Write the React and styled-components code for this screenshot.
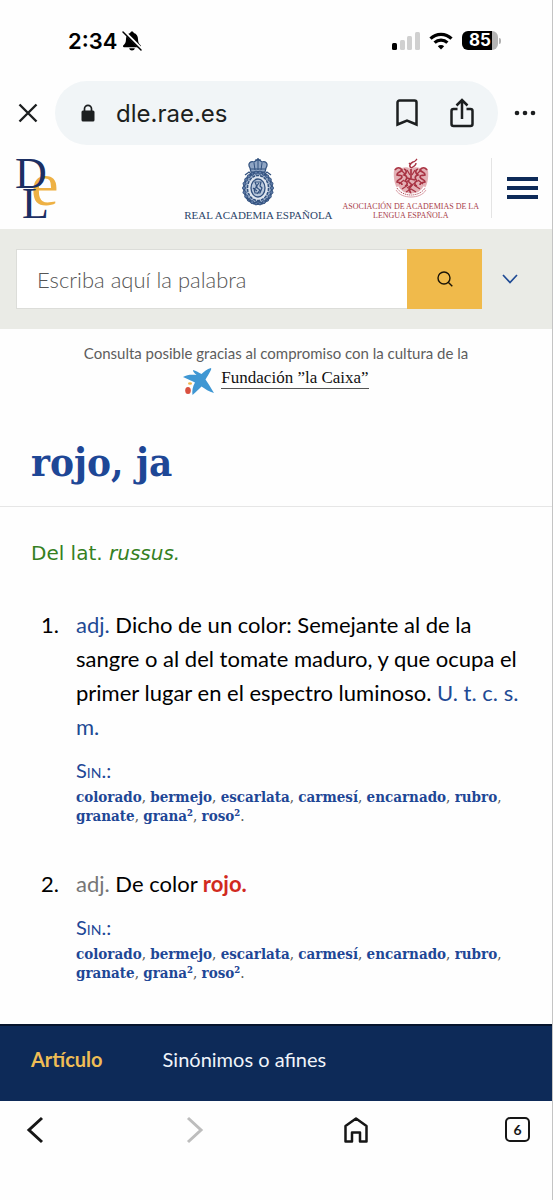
import React, { useState } from 'react';
import styled, { createGlobalStyle, css } from 'styled-components';

const GlobalStyle = createGlobalStyle`
  * {
    box-sizing: border-box;
  }

  body {
    margin: 0;
    background: #fefefe;
    color: #000;
    font-family: Lato, 'Liberation Sans', sans-serif;
  }

  button {
    padding: 0;
    border: none;
    background: none;
    color: inherit;
    font: inherit;
    cursor: pointer;
  }

  a {
    color: inherit;
    text-decoration: none;
  }

  svg {
    display: block;
    flex: none;
    overflow: visible;
  }
`;

const Screen = styled.div`
  display: flex;
  flex-direction: column;
  min-height: 100vh;
  border-right: 1px solid #c4c4c4;
`;

/* Status bar */
const StatusBar = styled.div`
  display: flex;
  justify-content: space-between;
  align-items: center;
  height: 81px;
  padding: 0 51px 0 68px;
  font-family: Inter, 'Liberation Sans', sans-serif;
`;

const StatusGroup = styled.div`
  display: flex;
  align-items: center;
  gap: ${({ $gap }) => $gap}px;
`;

const Clock = styled.span`
  font-size: 22px;
  font-weight: 600;
`;

const Battery = styled.span`
  display: flex;
  align-items: center;
  gap: 1px;

  &::after {
    content: '';
    width: 2px;
    height: 6px;
    border-radius: 0 2px 2px 0;
    background: #b0b0b0;
  }
`;

const BatteryLevel = styled.span`
  width: 36px;
  height: 19px;
  border-radius: 6px;
  background: linear-gradient(to right, #000 84%, #b4b4b4 84%);
  color: #fff;
  font-size: 17px;
  font-weight: 700;
  line-height: 19px;
  text-align: center;
`;

/* Browser address bar */
const BrowserBar = styled.div`
  display: flex;
  align-items: center;
  height: 64px;
  padding-right: 16px;
  color: #1c1f20;
`;

const CloseButton = styled.button`
  display: flex;
  justify-content: center;
  width: 55px;
`;

const AddressPill = styled.div`
  display: flex;
  flex: 1;
  align-items: center;
  height: 64px;
  margin-right: 16px;
  padding: 0 24px 0 26px;
  border-radius: 32px;
  background: #f1f5f7;
`;

const Address = styled.span`
  flex: 1;
  margin-left: 21px;
  font-family: Inter, 'Liberation Sans', sans-serif;
  font-size: 24px;
`;

const PillActions = styled.div`
  display: flex;
  gap: 32px;
`;

/* Site header */
const SiteHeader = styled.header`
  display: flex;
  align-items: flex-start;
  height: 84px;
  padding: 13px 14px 0 15px;
`;

const Institutions = styled.div`
  display: flex;
  flex: 1;
  justify-content: flex-end;
  gap: 10px;
  padding-right: 12px;
`;

const Institution = styled.a`
  display: flex;
  flex-direction: column;
  align-items: center;
  color: ${({ $color }) => $color};
  font-family: 'Liberation Serif', serif;
  font-size: ${({ $size }) => $size}px;
  line-height: 9px;
  text-align: center;
  white-space: nowrap;
`;

const RaeName = styled.span`
  padding-top: 5px;
`;

const AsaleName = styled.span`
  padding-top: 3px;
`;

const MenuButton = styled.button`
  display: flex;
  align-items: center;
  height: 60px;
  padding-left: 15px;
  border-left: 1px solid #e4e4e4;
`;

/* Search */
const SearchBar = styled.form`
  display: flex;
  align-items: center;
  height: 100px;
  padding: 0 15px 0 16px;
  background: #eaebe6;
`;

const SearchInput = styled.input`
  flex: 1;
  min-width: 0;
  height: 60px;
  padding: 0 20px;
  border: 1px solid #dcddd9;
  border-right: none;
  border-radius: 0;
  outline: none;
  background: #fff;
  font-family: Lato, 'Liberation Sans', sans-serif;
  font-size: 22px;
  font-weight: 300;

  &::placeholder {
    color: #555;
    opacity: 1;
  }
`;

const SearchButton = styled.button`
  display: flex;
  align-items: center;
  justify-content: center;
  width: 75px;
  height: 60px;
  background: #f0ba4b;
`;

const ExpandButton = styled.button`
  display: flex;
  justify-content: center;
  width: 55px;
  color: #1f4a94;
`;

/* Sponsor */
const Sponsor = styled.div`
  display: flex;
  flex-direction: column;
  align-items: center;
  padding: 14px 0 0;
  color: #5d5d5d;
  font-size: 15px;
  line-height: 20px;
`;

const SponsorLink = styled.a`
  display: flex;
  align-items: flex-start;
  gap: 6px;
  margin-top: 5px;
  color: #111;
  font-family: 'Liberation Serif', serif;
  font-size: 17px;
`;

const SponsorName = styled.span`
  border-bottom: 1px solid #555;
`;

/* Article */
const Headword = styled.h1`
  margin: 0;
  padding: 39px 31px 16px;
  border-bottom: 1px solid #e6e6e6;
  color: #1e4796;
  font-family: 'DejaVu Serif Condensed', 'DejaVu Serif', serif;
  font-size: 40px;
  font-stretch: condensed;
  font-weight: 700;
  line-height: 56px;
`;

const Article = styled.article`
  flex: 1;
  padding: 32px 24px 0 31px;
`;

const Etymology = styled.p`
  margin: 0;
  color: #35801f;
  font-family: Verdana, 'DejaVu Sans', sans-serif;
  font-size: 20px;
  line-height: 28px;
`;

const Senses = styled.ol`
  display: flex;
  flex-direction: column;
  gap: 41px;
  margin: 41px 0 0;
  padding: 0;
  list-style: none;
`;

const Sense = styled.li`
  display: flex;
`;

const SenseNumber = styled.span`
  width: 45px;
  padding-left: 10px;
  font-size: 22px;
  line-height: 34px;
`;

const SenseBody = styled.div`
  flex: 1;
`;

const Definition = styled.p`
  margin: 0 0 13px;
  font-size: 22px;
  line-height: 34px;
`;

const Mark = styled.abbr`
  color: ${({ $muted }) => ($muted ? '#767676' : '#1f4a94')};
`;

const Highlight = styled.strong`
  color: #d12a1e;
`;

const SynLabel = styled.div`
  color: #1e4796;
  font-size: 20px;
  font-variant: small-caps;
  line-height: 26px;
`;

const Synonyms = styled.p`
  margin: 5px 0 0;
  color: #555;
  font-family: 'DejaVu Serif Condensed', 'DejaVu Serif', serif;
  font-size: 15px;
  font-stretch: condensed;
  line-height: 19px;

  a {
    color: #1e4796;
    font-weight: 700;
  }
`;

/* Bottom */
const Tabs = styled.nav`
  display: flex;
  gap: 60px;
  height: 77px;
  padding: 20px 31px 0;
  border-top: 2px solid #06142c;
  background: #0d2a58;
`;

const Tab = styled.a`
  color: #f0f4fa;
  font-size: 20px;
  line-height: 26px;

  ${({ $active }) =>
    $active &&
    css`
      color: #efbd55;
      font-weight: 700;
    `}
`;

const BottomNav = styled.nav`
  display: flex;
  align-items: center;
  justify-content: space-between;
  height: 99px;
  padding: 0 22px 42px;
  color: #161616;
`;

const NavButton = styled.button`
  display: flex;

  &:disabled {
    color: #bdbdbd;
  }
`;

const TabCount = styled.span`
  width: 25px;
  height: 25px;
  border: 2px solid #161616;
  border-radius: 5px;
  font-size: 14px;
  font-weight: 700;
  line-height: 21px;
  text-align: center;
`;

const BellOff = () => (
  <svg width="20" height="20" viewBox="0 0 20 20">
    <path d="M10 0.500c1 0 1.700.6 1.800 1.500C14.500 2.800 16 5 16 8c0 3.600 1 4.800 2.800 6.600.5.700.1 1.600-.8 1.600H2c-.9 0-1.300-.9-.8-1.600C3 12.800 4 11.600 4 8c0-3 1.500-5.200 4.200-6C8.300 1.100 9 .5 10 .5zM7.200 17.300h5.600c-.3 1.400-1.400 2.200-2.800 2.200s-2.500-.8-2.800-2.200z" fill="#000" />
    <path d="M2 0.500l17.500 17.500" stroke="#fff" strokeWidth="3" />
    <path d="M1 1l18 18" stroke="#000" strokeWidth="1.500" strokeLinecap="round" />
  </svg>
);

const Signal = () => (
  <svg width="28" height="18" viewBox="0 0 28 18">
    <rect x="0" y="11" width="5" height="7" rx="1.500" fill="#000" />
    <rect x="8" y="8" width="5" height="10" rx="1.500" fill="#d0d0d0" />
    <rect x="15" y="4" width="5" height="14" rx="1.500" fill="#d0d0d0" />
    <rect x="23" y="0" width="5" height="18" rx="1.500" fill="#d0d0d0" />
  </svg>
);

const Wifi = () => (
  <svg width="24" height="18" viewBox="0 0 24 18" fill="none" stroke="#000" strokeWidth="3.200">
    <path d="M1.500 6.600a15 15 0 0 1 21 0" />
    <path d="M5.600 10.700a9.200 9.200 0 0 1 12.800 0" />
    <path d="M12 17.500l-3.200-3.300a4.600 4.600 0 0 1 6.400 0z" fill="#000" stroke="none" />
  </svg>
);

const CloseIcon = () => (
  <svg width="20" height="20" viewBox="0 0 20 20" stroke="currentColor" strokeWidth="2.400">
    <path d="M1.500 1.500l17 17M18.500 1.500l-17 17" />
  </svg>
);

const Lock = () => (
  <svg width="14" height="18" viewBox="0 0 14 18">
    <rect x="0.500" y="6.500" width="13" height="11" rx="1.500" fill="#1c1f20" />
    <path d="M3.500 7V4.800a3.500 3.500 0 0 1 7 0V7" fill="none" stroke="#1c1f20" strokeWidth="1.700" />
  </svg>
);

const Bookmark = () => (
  <svg width="22" height="28" viewBox="0 0 22 28" fill="none" stroke="currentColor" strokeWidth="2.500">
    <path d="M1.500 25.500V3.500a2 2 0 0 1 2-2h15a2 2 0 0 1 2 2v22L11 21.500z" />
  </svg>
);

const Share = () => (
  <svg width="24" height="30" viewBox="0 0 24 30" fill="none" stroke="currentColor" strokeWidth="2.500">
    <path d="M7.500 11H3.500a2 2 0 0 0-2 2v13a2 2 0 0 0 2 2h17a2 2 0 0 0 2-2V13a2 2 0 0 0-2-2h-4M12 21V2.500M6.500 7.500L12 2l5.500 5.500" />
  </svg>
);

const Dots = () => (
  <svg width="22" height="6" viewBox="0 0 22 6" fill="currentColor">
    <circle cx="3" cy="3" r="2.300" />
    <circle cx="11" cy="3" r="2.300" />
    <circle cx="19" cy="3" r="2.300" />
  </svg>
);

const DleLogo = () => (
  <svg width="44" height="62" viewBox="0 0 44 62" fontFamily="'Liberation Serif', serif">
    <text x="16" y="47" fontSize="62" fill="#eeb144">e</text>
    <text x="0" y="30" fontSize="44" fill="#1c2f63">D</text>
    <text x="7" y="60" fontSize="44" fill="#1c2f63">L</text>
  </svg>
);

const beads = Array.from({ length: 22 }, (_, i) => (i * Math.PI * 2) / 22);

const RaeSeal = () => (
  <svg width="34" height="48" viewBox="0 0 34 48" fill="none" stroke="#33527f">
    <path d="M9 10C6 5 10 3 13 4l4-3 4 3c3-1 7 1 4 6l-1 4H10z" fill="#8fa5c4" strokeWidth="1.200" />
    <path d="M17 0v12M13 5l1 7M21 5l-1 7M9 11h16M14 2h6" strokeWidth="1" />
    <ellipse cx="17" cy="30" rx="14" ry="16" fill="#9db1cc" strokeWidth="2" />
    {beads.map((a) => (
      <circle key={a} cx={17 + Math.cos(a) * 14} cy={30 + Math.sin(a) * 15.500} r="1.600" fill="#5e7aa5" strokeWidth="0.800" />
    ))}
    <ellipse cx="17" cy="30" rx="10.500" ry="12.500" fill="#dfe6ef" strokeWidth="1.500" strokeDasharray="3 1" />
    <ellipse cx="17" cy="30" rx="7" ry="9" fill="#b9c8dc" strokeWidth="1.300" />
    <path d="M14 24h6l-1 4 2 2-2 5h-5l-1-4 3-2zM12 30l4 3M18 25l-3 4 4 3-3 4" strokeWidth="1.200" />
    <path d="M4 17l4-3 3 3M30 17l-4-3-3 3M5 40l5 3M29 40l-5 3M12 46l5-3 5 3" strokeWidth="1.300" />
  </svg>
);

const AsaleCrest = () => (
  <svg width="36" height="41" viewBox="0 0 36 41" fill="none" stroke="#a83343">
    <path d="M1 12c1-3 5-4 8-2 3-1 6-1 9 1 3-2 6-2 9-1 3-2 7-1 8 2 1 9-1 17-6 22-3 2-7 3-11 4-4-1-8-2-11-4C2 29 0 21 1 12z" fill="#e3b0b5" stroke="none" />
    <path d="M18 10c-3-3 0-5 2-6 2 0 3-2 4-3M18 10c2-1 5-2 5-5M16 5l2 2" strokeWidth="1.400" />
    <path d="M2 12c2-3 5-3 7 0-2 3-5 2-5 5 3 1 4-1 5 2-1 3-5 2-5 5 3 1 5 0 5 3M11 11c3 1 3 4 0 6 4 1 3 4 1 6 3 1 3 4 0 5M18 11v9l-3 3 4 4-3 4 2 5M25 11c-3 1-3 4 0 6-4 1-3 4-1 6-3 1-3 4 0 5M34 12c-2-3-5-3-7 0 2 3 5 2 5 5-3 1-4-1-5 2 1 3 5 2 5 5-3 1-5 0-5 3" strokeWidth="1.700" />
    <path d="M8 12l4 4M28 12l-4 4M14 12l3 5M22 12l-3 5M14 20l8 2M14 30l8-5M6 26l5-4M30 26l-5-4M9 31l6-4M27 31l-6-4M13 34l5-3 5 3" strokeWidth="1.300" />
    <path d="M4 29c3 6 9 8 14 8 5 0 11-2 14-8" stroke="#fefefe" strokeWidth="3" />
    <path d="M4 30c3 5 9 7 14 7 5 0 11-2 14-7" strokeWidth="1" strokeDasharray="1 1" />
    <path d="M3 32c3 5 9 7 15 7 6 0 12-2 15-7" strokeWidth="0.800" stroke="#cf8790" />
  </svg>
);

const MenuIcon = () => (
  <svg width="31" height="22" viewBox="0 0 31 22" fill="#0d2a58">
    <rect width="31" height="4" />
    <rect y="9" width="31" height="4" />
    <rect y="18" width="31" height="4" />
  </svg>
);

const SearchIcon = () => (
  <svg width="16" height="16" viewBox="0 0 16 16" fill="none" stroke="#1a1408" strokeWidth="1.400">
    <circle cx="7" cy="7" r="6" />
    <path d="M11.200 11.200L15.300 15.300" />
  </svg>
);

const ChevronDown = () => (
  <svg width="16" height="10" viewBox="0 0 16 10" fill="none" stroke="currentColor" strokeWidth="1.700">
    <path d="M1 1l7 7.500L15 1" />
  </svg>
);

const CaixaStar = () => (
  <svg width="32" height="27" viewBox="0 0 32 27">
    <path d="M0 9C4 6.500 9 6.500 13.500 7 11 5 10 3.500 10 2c3 1 6 2.500 8.500 4C21 3.500 24 1 28 0c.5 1.200 0 2-.6 3-1.500 3-3.400 6-4.900 8.500 3 4.500 5.500 8.500 8.500 13.500-5-1.500-9-4-12.500-6.500C16 21 13 24 9.500 27c-.7-4 .2-8.500 2.500-12.500C9 13 4.500 11 0 9z" fill="#3f97d3" />
    <ellipse cx="7" cy="15.500" rx="2" ry="1.300" fill="#f0b64a" />
    <ellipse cx="5" cy="22.500" rx="2.800" ry="3.500" fill="#d9503f" />
  </svg>
);

const Back = ({ flip }) => (
  <svg width="24" height="28" viewBox="0 0 24 28" fill="none" stroke="currentColor" strokeWidth="3">
    <path d={flip ? 'M5 2l13 12L5 26' : 'M20 2L7 14l13 12'} />
  </svg>
);

const Home = () => (
  <svg width="24" height="26" viewBox="0 0 24 26" fill="none" stroke="currentColor" strokeWidth="2.500" strokeLinejoin="round">
    <path d="M1.500 9L12 1.500 22.500 9v15.500h-6.500v-9H8v9H1.500z" />
  </svg>
);

const SYNONYMS = ['colorado', 'bermejo', 'escarlata', 'carmesí', 'encarnado', 'rubro', 'granate', 'grana²', 'roso²'];

const SynonymList = () => (
  <>
    <SynLabel>Sin.:</SynLabel>
    <Synonyms>
      {SYNONYMS.map((word, index) => (
        <React.Fragment key={word}>
          <a href={`#${word}`}>{word}</a>
          {index < SYNONYMS.length - 1 ? ', ' : '.'}
        </React.Fragment>
      ))}
    </Synonyms>
  </>
);

const App = () => {
  const [query, setQuery] = useState('');

  return (
    <Screen>
      <GlobalStyle />
      <StatusBar>
        <StatusGroup $gap={5}>
          <Clock>2:34</Clock>
          <BellOff />
        </StatusGroup>
        <StatusGroup $gap={9}>
          <Signal />
          <Wifi />
          <Battery>
            <BatteryLevel>85</BatteryLevel>
          </Battery>
        </StatusGroup>
      </StatusBar>

      <BrowserBar>
        <CloseButton aria-label="Cerrar"><CloseIcon /></CloseButton>
        <AddressPill>
          <Lock />
          <Address>dle.rae.es</Address>
          <PillActions>
            <button aria-label="Guardar"><Bookmark /></button>
            <button aria-label="Compartir"><Share /></button>
          </PillActions>
        </AddressPill>
        <button aria-label="Más opciones"><Dots /></button>
      </BrowserBar>

      <SiteHeader>
        <a href="#inicio" aria-label="Inicio"><DleLogo /></a>
        <Institutions>
          <Institution href="#rae" $color="#2b4468" $size={11}>
            <RaeSeal />
            <RaeName>REAL ACADEMIA ESPAÑOLA</RaeName>
          </Institution>
          <Institution href="#asale" $color="#a83c49" $size={8}>
            <AsaleCrest />
            <AsaleName>ASOCIACIÓN DE ACADEMIAS DE LA<br />LENGUA ESPAÑOLA</AsaleName>
          </Institution>
        </Institutions>
        <MenuButton aria-label="Menú"><MenuIcon /></MenuButton>
      </SiteHeader>

      <SearchBar onSubmit={(e) => e.preventDefault()}>
        <SearchInput
          type="text"
          aria-label="Escriba aquí la palabra"
          placeholder="Escriba aquí la palabra"
          value={query}
          onChange={(e) => setQuery(e.target.value)}
        />
        <SearchButton type="submit" aria-label="Buscar"><SearchIcon /></SearchButton>
        <ExpandButton type="button" aria-label="Más búsquedas"><ChevronDown /></ExpandButton>
      </SearchBar>

      <Sponsor>
        Consulta posible gracias al compromiso con la cultura de la
        <SponsorLink href="#fundacion">
          <CaixaStar />
          <SponsorName>Fundación ”la Caixa”</SponsorName>
        </SponsorLink>
      </Sponsor>

      <Headword>rojo, ja</Headword>
      <Article>
        <Etymology>Del lat. <em>russus.</em></Etymology>
        <Senses>
          <Sense>
            <SenseNumber>1.</SenseNumber>
            <SenseBody>
              <Definition>
                <Mark>adj.</Mark> Dicho de un color: Semejante al de la sangre o al del tomate maduro, y
                que ocupa el primer lugar en el espectro luminoso. <Mark>U. t. c. s. m.</Mark>
              </Definition>
              <SynonymList />
            </SenseBody>
          </Sense>
          <Sense>
            <SenseNumber>2.</SenseNumber>
            <SenseBody>
              <Definition>
                <Mark $muted>adj.</Mark> De color <Highlight>rojo.</Highlight>
              </Definition>
              <SynonymList />
            </SenseBody>
          </Sense>
        </Senses>
      </Article>

      <Tabs>
        <Tab href="#articulo" $active>Artículo</Tab>
        <Tab href="#sinonimos">Sinónimos o afines</Tab>
      </Tabs>
      <BottomNav>
        <NavButton aria-label="Atrás"><Back /></NavButton>
        <NavButton aria-label="Adelante" disabled><Back flip /></NavButton>
        <NavButton aria-label="Página de inicio"><Home /></NavButton>
        <NavButton aria-label="Pestañas"><TabCount>6</TabCount></NavButton>
      </BottomNav>
    </Screen>
  );
};

export default App;
